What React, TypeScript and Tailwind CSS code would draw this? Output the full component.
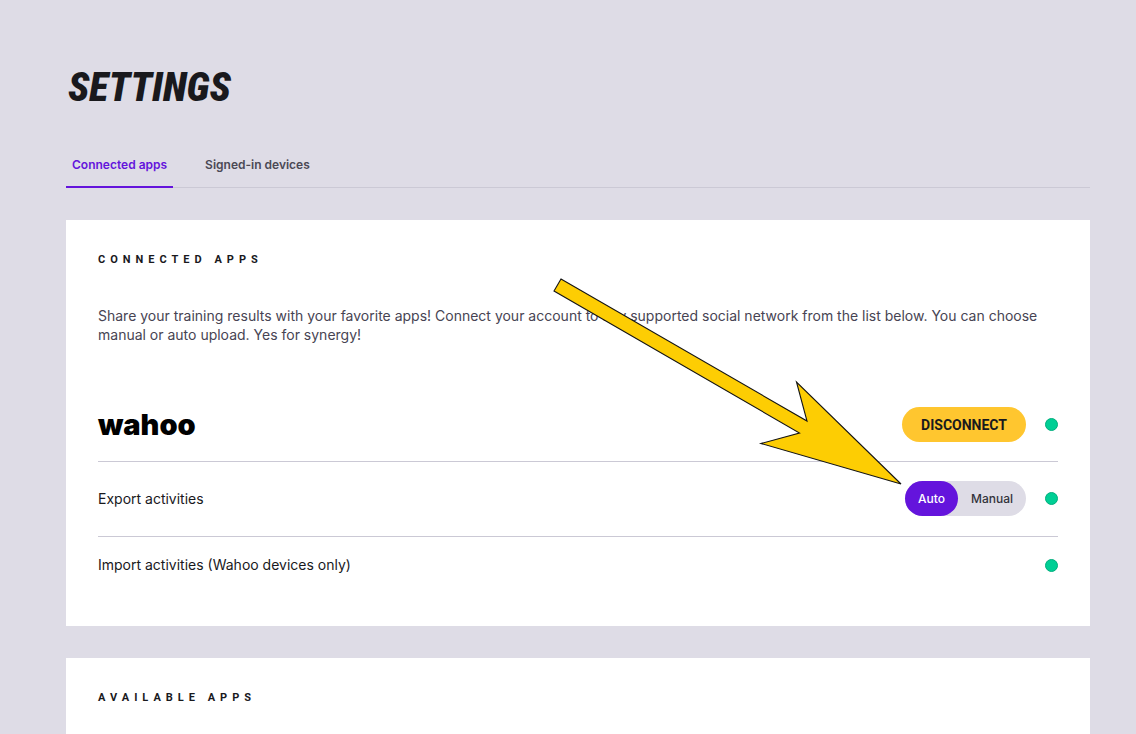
import { useState } from 'react'

type UploadMode = 'Auto' | 'Manual'

const TABS = ['Connected apps', 'Signed-in devices'] as const
const MODES: UploadMode[] = ['Auto', 'Manual']

function StatusDot({ label }: { label: string }) {
  return (
    <span
      role="img"
      aria-label={label}
      className="size-[13px] shrink-0 rounded-full border border-[#00ae7d] bg-[#00cf95]"
    />
  )
}

function Pointer() {
  return (
    <svg
      aria-hidden
      width="349"
      height="207"
      viewBox="0 0 349 207"
      className="pointer-events-none absolute right-full bottom-[31px] mr-[3px] max-w-none"
    >
      <path
        d="M8 1 L254 143 L243.5 104 L348 206 L208 165.5 L246.5 155 L1 13 Z"
        fill="#fdcd03"
        stroke="#141414"
        strokeWidth="1.1"
      />
    </svg>
  )
}

function UploadSwitch({ labelledBy }: { labelledBy: string }) {
  const [mode, setMode] = useState<UploadMode>('Auto')

  return (
    <div
      role="radiogroup"
      aria-labelledby={labelledBy}
      className="relative flex h-[35px] rounded-full bg-[#dedce6]"
    >
      {MODES.map((m) => (
        <label
          key={m}
          className="flex cursor-pointer items-center rounded-full px-[13px] text-xs font-medium text-[#33333b] has-checked:bg-[#6414dc] has-checked:text-white"
        >
          <input
            type="radio"
            name="upload-mode"
            value={m}
            checked={mode === m}
            onChange={() => setMode(m)}
            className="size-0 appearance-none"
          />
          {m}
        </label>
      ))}
      <Pointer />
    </div>
  )
}

function SectionTitle({ children }: { children: string }) {
  return (
    <h2 className="font-['Roboto',sans-serif] text-[11px] leading-4 font-bold tracking-[5px] text-[#19191d] uppercase">
      {children}
    </h2>
  )
}

export default function App() {
  const [tab, setTab] = useState<(typeof TABS)[number]>('Connected apps')

  return (
    <main className="min-h-screen bg-[#dedce6] pt-16 pr-[46px] pl-[66px] font-['Inter',sans-serif] text-[#19191d]">
      <h1 className="pl-0.5 font-['Roboto_Condensed','Roboto',sans-serif] text-[40px] leading-[48px] font-black italic">
        SETTINGS
      </h1>

      <div role="tablist" className="mt-8 flex gap-[26px] border-b border-[#cbc9d5]">
        {TABS.map((t) => (
          <button
            key={t}
            type="button"
            role="tab"
            aria-selected={t === tab}
            onClick={() => setTab(t)}
            className="-mb-px h-11 border-b-2 border-transparent px-1.5 text-xs font-semibold text-[#4b4955] aria-selected:border-[#6414dc] aria-selected:text-[#6414dc]"
          >
            {t}
          </button>
        ))}
      </div>

      <section className="mt-8 bg-white px-8 pt-8 pb-[51px]">
        <SectionTitle>Connected apps</SectionTitle>

        <p className="mt-[38px] text-sm leading-[19px] text-[#474453]">
          Share your training results with your favorite apps! Connect your account to any supported
          social network from the list below. You can choose manual or auto upload. Yes for synergy!
        </p>

        <div className="mt-11">
          <div className="flex items-center justify-between border-b border-[#cbc9d5] py-[19px]">
            <span className="text-[29px] leading-[35px] font-black text-black">wahoo</span>
            <div className="flex items-center gap-[19px]">
              <button
                type="button"
                className="h-[35px] rounded-full bg-[#ffc62f] px-[19px] font-['Roboto',sans-serif] text-sm font-bold text-[#19191d]"
              >
                DISCONNECT
              </button>
              <StatusDot label="Wahoo connected" />
            </div>
          </div>

          <div className="flex items-center justify-between border-b border-[#cbc9d5] pt-[19px] pb-5">
            <span id="export-label" className="text-sm">
              Export activities
            </span>
            <div className="flex items-center gap-[19px]">
              <UploadSwitch labelledBy="export-label" />
              <StatusDot label="Export enabled" />
            </div>
          </div>

          <div className="flex items-center justify-between pt-[18px]">
            <span className="text-sm">Import activities (Wahoo devices only)</span>
            <StatusDot label="Import enabled" />
          </div>
        </div>
      </section>

      <section className="mt-8 bg-white px-8 pt-8 pb-12">
        <SectionTitle>Available apps</SectionTitle>
      </section>
    </main>
  )
}
